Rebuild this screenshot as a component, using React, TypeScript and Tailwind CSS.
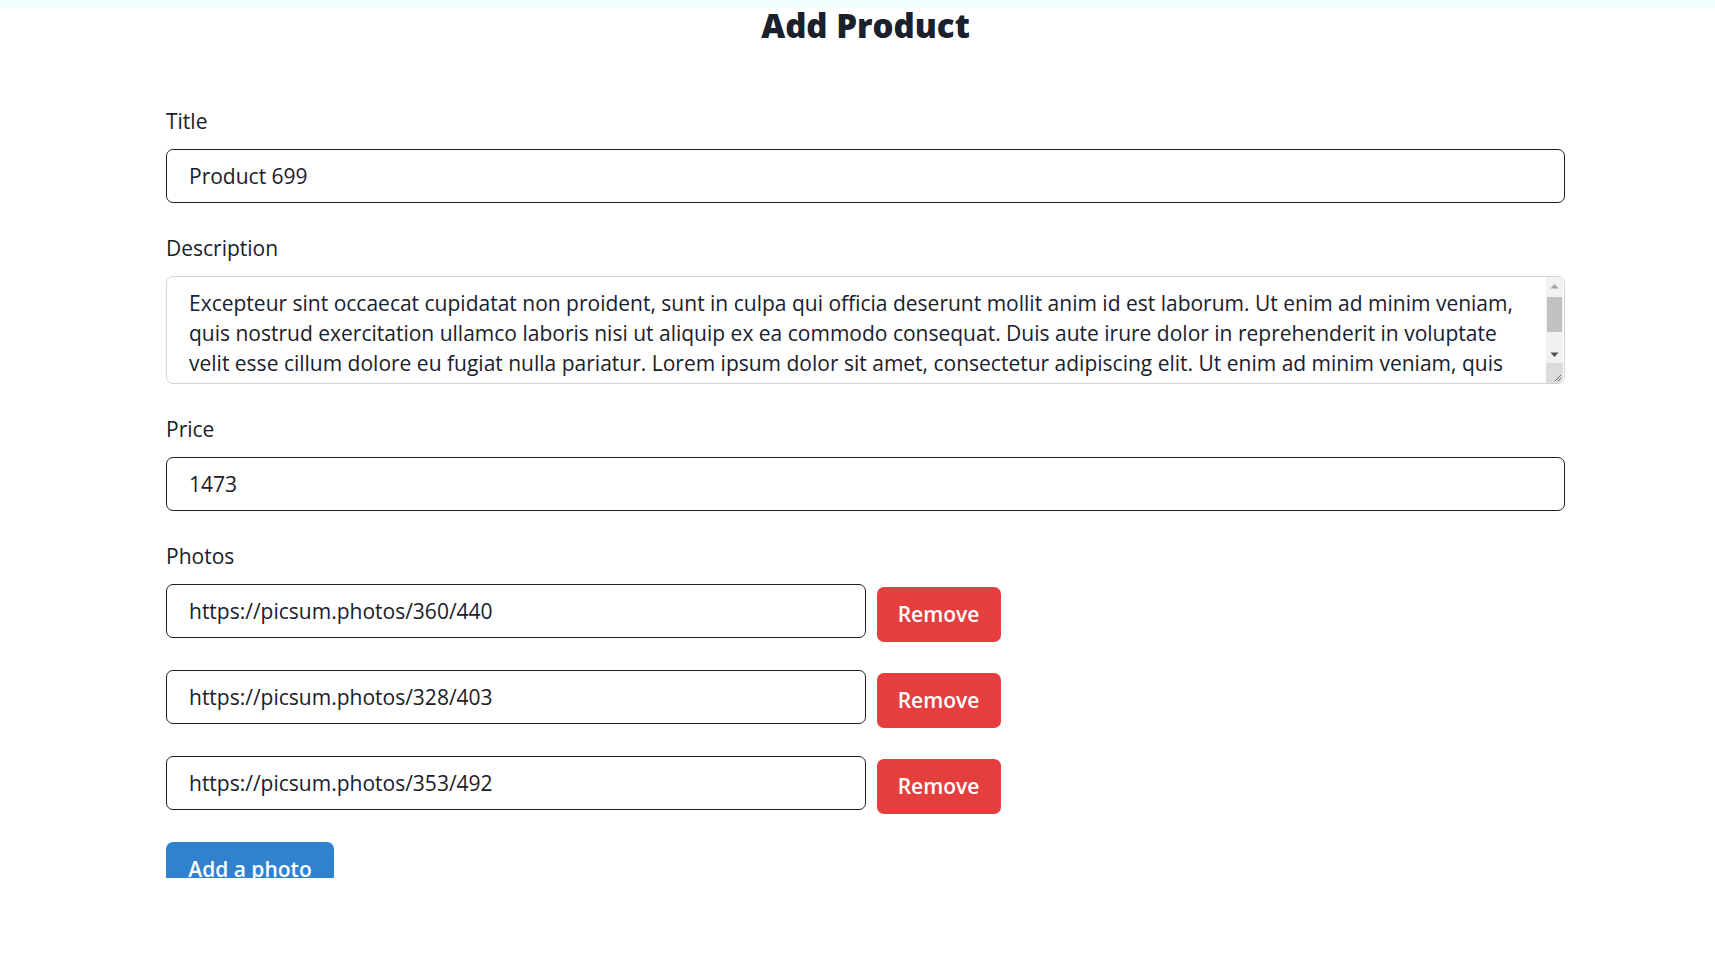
import React, { useState } from "react";

const DESC =
  "Excepteur sint occaecat cupidatat non proident, sunt in culpa qui officia deserunt mollit anim id est laborum. Ut enim ad minim veniam, quis nostrud exercitation ullamco laboris nisi ut aliquip ex ea commodo consequat. Duis aute irure dolor in reprehenderit in voluptate velit esse cillum dolore eu fugiat nulla pariatur. Lorem ipsum dolor sit amet, consectetur adipiscing elit. Ut enim ad minim veniam, quis nostrud exercitation ullamco laboris nisi ut aliquip ex ea commodo consequat. Duis aute irure dolor in reprehenderit in voluptate velit esse cillum dolore eu fugiat nulla pariatur.";

export default function App() {
  const [title, setTitle] = useState("Product 699");
  const [desc, setDesc] = useState(DESC);
  const [price, setPrice] = useState("1473");
  const [photos, setPhotos] = useState([
    "https://picsum.photos/360/440",
    "https://picsum.photos/328/403",
    "https://picsum.photos/353/492",
  ]);

  const inputCls =
    "block w-full h-[54px] rounded-[7px] border border-[#1a202c] bg-white pl-[22px] pr-[22px] text-[21px] text-[#1a202c] outline-none";
  const labelCls = "block text-[21px] font-medium leading-[30px] mb-[13px]";

  return (
    <div
      className="min-h-screen bg-white text-[#1a202c]"
      style={{ fontFamily: "'Open Sans', 'Noto Sans', sans-serif" }}
    >
      <div className="h-[8px] bg-[#f0fffe]" />
      <h1 className="pl-[166px] pr-[150px] text-center text-[33px] font-extrabold leading-[35px] text-[#1a202c]">
        Add Product
      </h1>
      <div className="h-[835px] overflow-hidden">
        <div className="pl-[166px] pr-[150px] pt-[63px] flex flex-col gap-[30px]">
          <div>
            <label className={labelCls}>Title</label>
            <input className={inputCls} value={title} onChange={(e) => setTitle(e.target.value)} />
          </div>
          <div>
            <label className={labelCls}>Description</label>
            <div className="relative">
              <textarea
                className="block w-full h-[108px] rounded-[7px] border border-[#cbd5e0] bg-white pl-[22px] pr-[44px] pt-[11px] text-[21px] leading-[30px] text-[#1a202c] outline-none resize-none [scrollbar-width:none]"
                value={desc}
                onChange={(e) => setDesc(e.target.value)}
              />
              <div className="absolute right-[2px] top-[1px] bottom-[1px] w-[17px] flex flex-col bg-[#f1f1f1] rounded-tr-[6px] rounded-br-[6px] overflow-hidden pointer-events-none">
                <div className="h-[17px] flex items-center justify-center">
                  <svg width="9" height="6" viewBox="0 0 9 6">
                    <path d="M0.5 5.5 L4.5 1 L8.5 5.5 Z" fill="#a3a3a3" />
                  </svg>
                </div>
                <div className="mx-[1px] mt-[3px] h-[35px] bg-[#c1c1c1]" />
                <div className="flex-1" />
                <div className="h-[17px] flex items-center justify-center">
                  <svg width="9" height="6" viewBox="0 0 9 6">
                    <path d="M0.5 0.5 L8.5 0.5 L4.5 5 Z" fill="#505050" />
                  </svg>
                </div>
                <div className="h-[20px] bg-[#dcdcdc] flex items-end justify-end pr-[1px] pb-[1px]">
                  <svg width="10" height="10" viewBox="0 0 10 10">
                    <path d="M9 3 L3 9 M9 6 L6 9" stroke="#6b6b6b" strokeWidth="1" />
                  </svg>
                </div>
              </div>
            </div>
          </div>
          <div>
            <label className={labelCls}>Price</label>
            <input className={inputCls} value={price} onChange={(e) => setPrice(e.target.value)} />
          </div>
          <div>
            <label className={labelCls}>Photos</label>
            <div className="flex flex-col gap-[32px]">
              {photos.map((p, i) => (
                <div key={i} className="flex items-start gap-[11px]">
                  <div className="w-1/2">
                    <input
                      className={inputCls}
                      value={p}
                      onChange={(e) => {
                        const n = [...photos];
                        n[i] = e.target.value;
                        setPhotos(n);
                      }}
                    />
                  </div>
                  <button
                    className="mt-[3px] -mb-[4px] h-[55px] w-[124px] rounded-[7px] bg-[#e53e3e] text-[21px] font-semibold text-white"
                    onClick={() => setPhotos(photos.filter((_, j) => j !== i))}
                  >
                    Remove
                  </button>
                </div>
              ))}
              <div>
                <button
                  className="h-[55px] w-[168px] rounded-[7px] bg-[#3182ce] text-[21px] font-semibold text-white"
                  onClick={() => setPhotos([...photos, ""])}
                >
                  Add a photo
                </button>
              </div>
            </div>
          </div>
        </div>
      </div>
    </div>
  );
}
